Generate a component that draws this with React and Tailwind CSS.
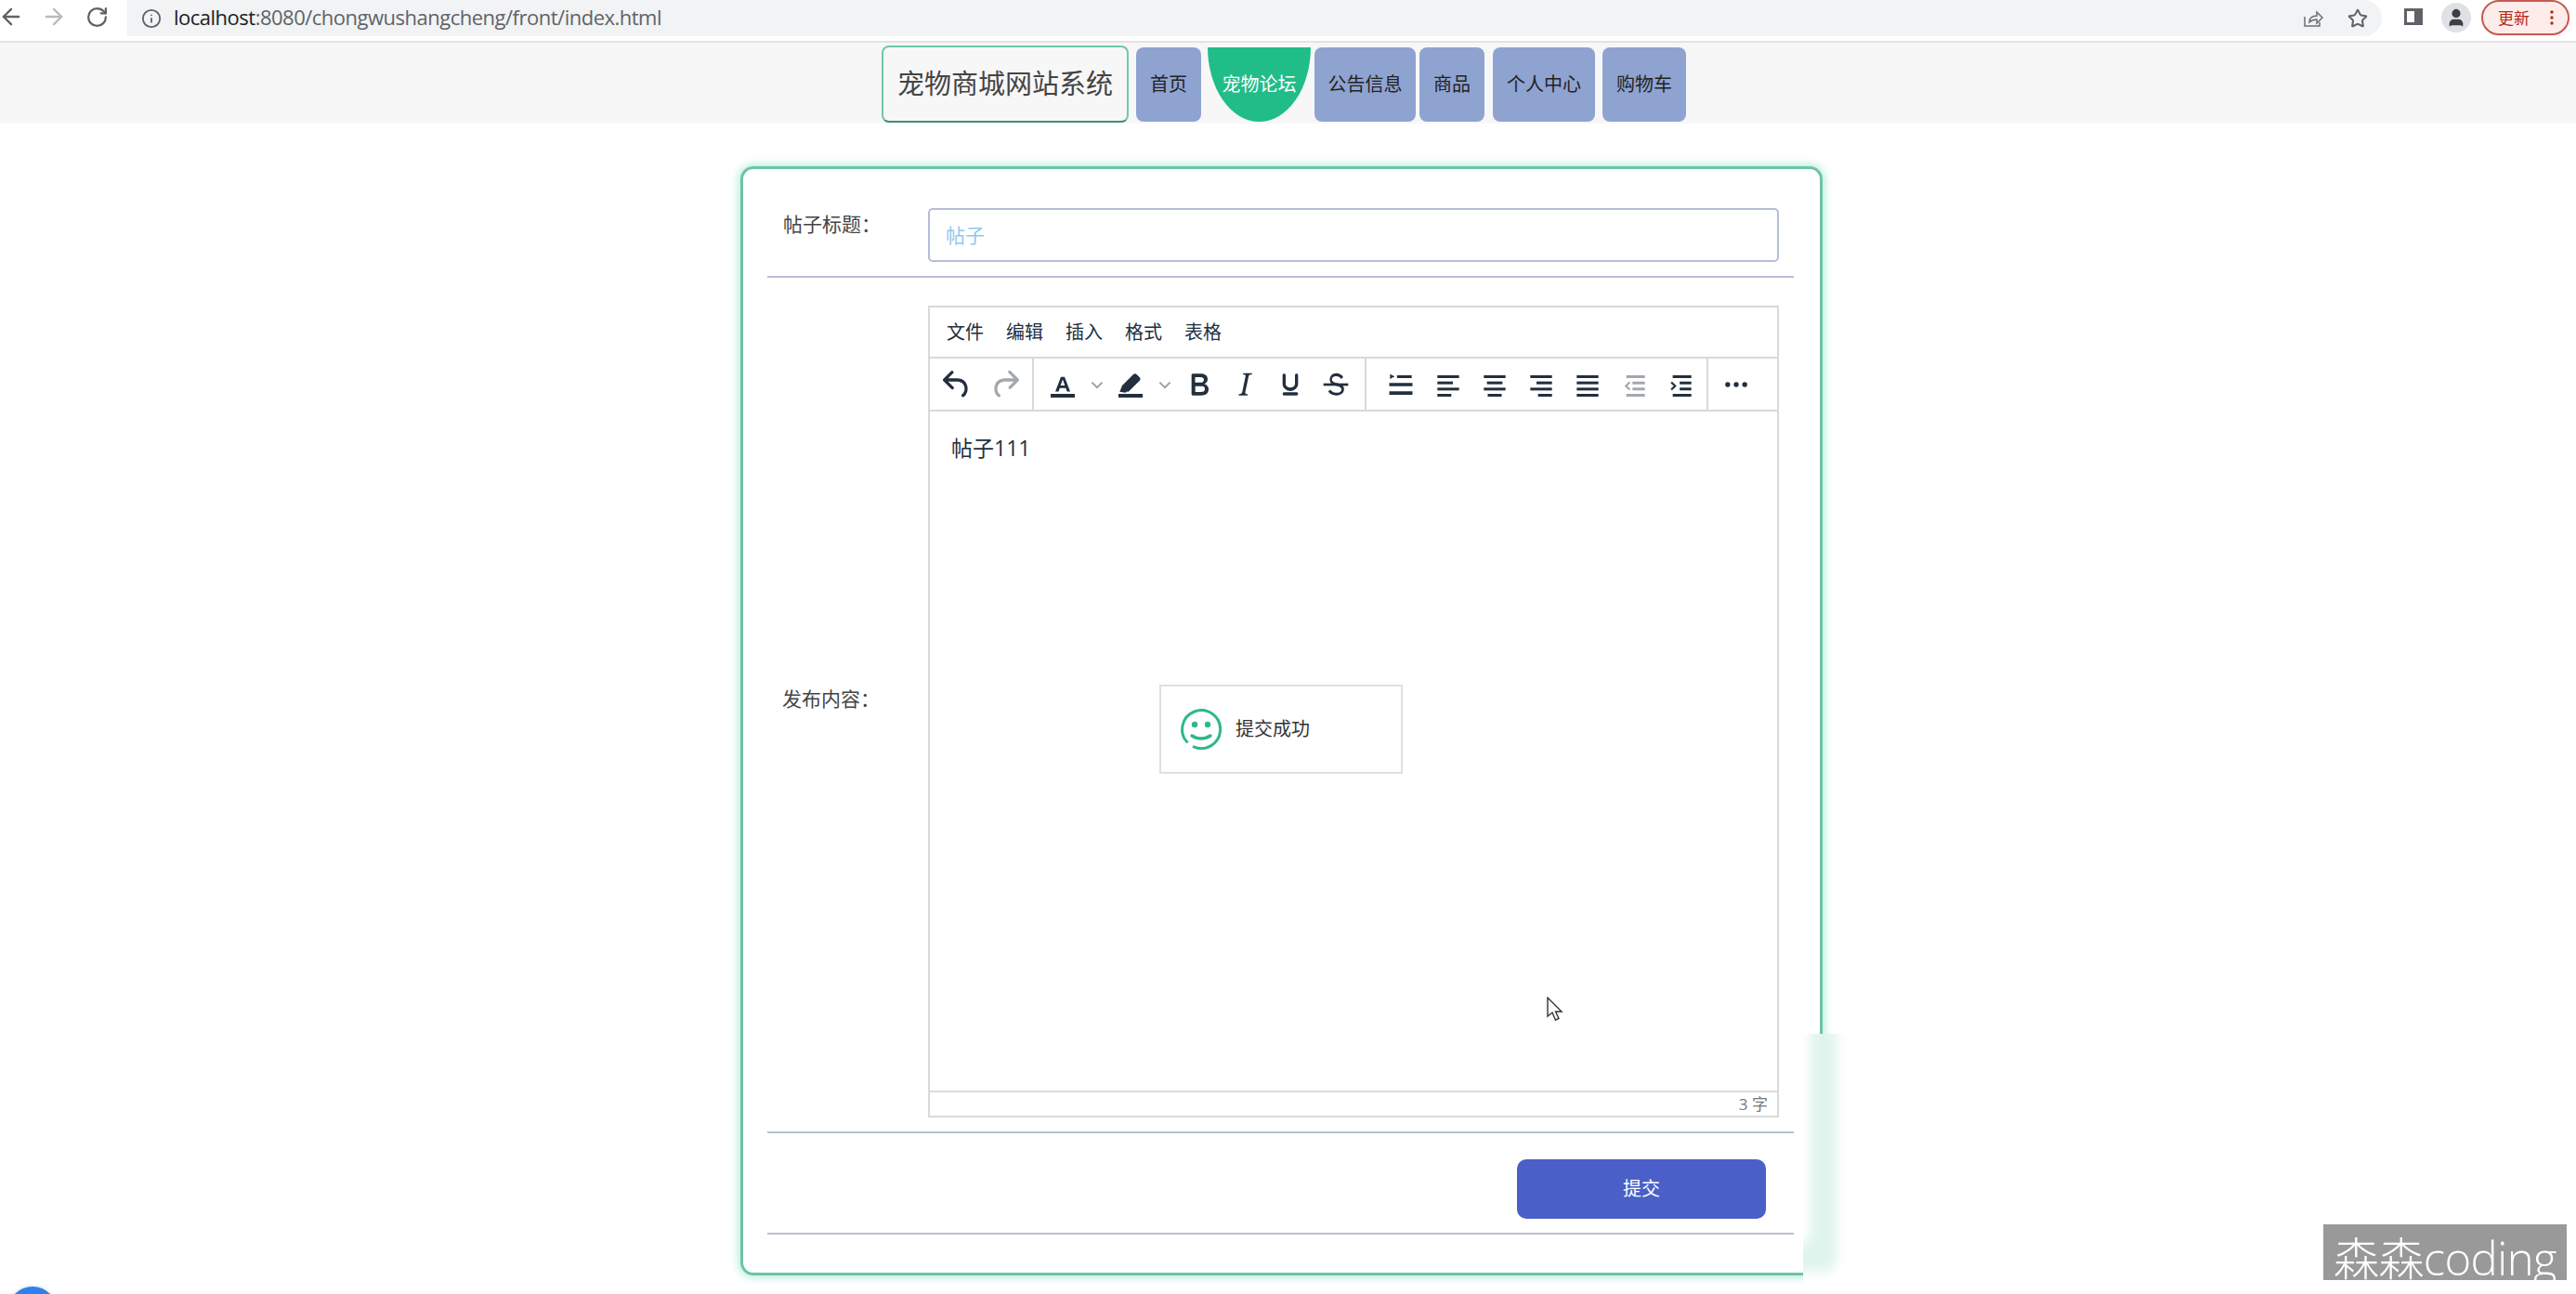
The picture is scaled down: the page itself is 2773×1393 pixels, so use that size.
import { ArrowLeft, ArrowRight, RotateCw, Info, Star, User } from "lucide-react";

const navItems = [
  { label: "首页", width: "w-[70px]", gap: "ml-[8px]" },
  { label: "宠物论坛", width: "w-[111px]", gap: "ml-[7px]", active: true },
  { label: "公告信息", width: "w-[109px]", gap: "ml-[4px]" },
  { label: "商品", width: "w-[70px]", gap: "ml-[4px]" },
  { label: "个人中心", width: "w-[110px]", gap: "ml-[9px]" },
  { label: "购物车", width: "w-[90px]", gap: "ml-[8px]" },
];

// editor icons, 24 unit box like the editor's own set
const Ico = ({ children, className = "text-[#222f3e]" }) => (
  <svg viewBox="0 0 24 24" fill="currentColor" className={`w-10 h-10 ${className}`}>
    {children}
  </svg>
);

const Btn = ({ children, className = "w-[50px]" }) => (
  <div className={`h-full flex items-center justify-center ${className}`}>{children}</div>
);

const Chevron = () => (
  <svg viewBox="0 0 10 10" fill="none" stroke="#9aa0a8" strokeWidth="1.2" className="w-4 h-4">
    <path d="M1.5 3.5 5 7l3.5-3.5" />
  </svg>
);

const Lines = ({ rows }) => (
  <Ico>
    {rows.map(([x, w], i) => (
      <rect key={i} x={x} y={6 + i * 4} width={w} height="1.8" />
    ))}
  </Ico>
);

function Toolbar() {
  return (
    <div className="flex h-[57px] border-b-2 border-[#d9d9d9]">
      <div className="flex items-center pl-[4px] w-[112px] border-r-2 border-[#d9d9d9]">
        <Btn>
          <Ico>
            <path d="M6.4 8H12c3.7 0 6.2 2 6.8 5.1.6 2.7-.4 5.6-2.3 6.8a1 1 0 0 1-1-1.8c1.1-.6 1.8-2.7 1.4-4.6-.5-2.1-2.1-3.5-4.9-3.5H6.4l3.3 3.3a1 1 0 1 1-1.4 1.4l-5-5a1 1 0 0 1 0-1.4l5-5a1 1 0 0 1 1.4 1.4L6.4 8Z" />
          </Ico>
        </Btn>
        <Btn className="w-[50px] ml-[2px]">
          <Ico className="text-[#a3a8ae]">
            <path d="M17.6 10H12c-2.8 0-4.4 1.4-4.9 3.5-.4 2 .3 4 1.4 4.6a1 1 0 1 1-1 1.8c-2-1.2-2.9-4.1-2.3-6.8.6-3 3-5.1 6.8-5.1h5.6l-3.3-3.3a1 1 0 1 1 1.4-1.4l5 5a1 1 0 0 1 0 1.4l-5 5a1 1 0 0 1-1.4-1.4l3.3-3.3Z" />
          </Ico>
        </Btn>
      </div>
      <div className="flex items-center pl-[6px] w-[358px] border-r-2 border-[#d9d9d9]">
        <Btn>
          <Ico>
            <path d="M4.200 18h15.600v2.400H4.200z" />
            <path d="M10.800 7h2.400l3.600 9.500h-2l-.8-2.300h-3.900l-.8 2.300H7.200L10.800 7Zm-.2 5.600h2.800L12 8.700l-1.400 3.900Z" />
          </Ico>
        </Btn>
        <Btn className="w-[23px]"><Chevron /></Btn>
        <Btn>
          <Ico>
            <path d="M4.200 18h15.600v2.400H4.200z" />
            <path d="M5 16.600 6.600 12.600l7.200-7.200a1.500 1.500 0 0 1 2.100 0l2 2a1.500 1.500 0 0 1 0 2.100l-7.300 7.100-1-.1-.8.800L5 16.600Z" />
          </Ico>
        </Btn>
        <Btn className="w-[24px]"><Chevron /></Btn>
        <Btn className="w-[49px]">
          <Ico>
            <path d="M7.800 19c-.3 0-.5 0-.6-.2l-.2-.5V5.700c0-.2 0-.4.200-.5l.6-.2h5c1.500 0 2.700.3 3.500 1 .7.600 1.100 1.400 1.100 2.500a3 3 0 0 1-.6 1.900c-.4.600-1 1-1.600 1.200.4.100.9.300 1.300.6s.8.700 1 1.200c.4.400.5 1 .5 1.600 0 1.300-.4 2.300-1.300 3-.8.700-2.100 1-3.800 1H7.800Zm5-8.300c.6 0 1.200-.1 1.600-.5.4-.3.6-.7.6-1.300 0-1.100-.8-1.700-2.300-1.700H9.300v3.500h3.400Zm.5 6c.7 0 1.300-.1 1.700-.4.4-.4.6-.9.6-1.500s-.2-1-.7-1.400c-.4-.3-1-.4-2-.4H9.400v3.800h4Z" />
          </Ico>
        </Btn>
        <Btn className="w-[49px]">
          <Ico>
            <path d="M16.700 4.700l-.1.900h-.3c-.6 0-1 0-1.400.3-.3.3-.4.6-.5 1.100l-2.100 9.800v.6c0 .5.4.8 1.400.8h.2l-.2.8H8l.2-.8h.2c1.100 0 1.800-.5 2-1.500l2-9.800.1-.5c0-.6-.4-.8-1.400-.8h-.3l.2-.9h5.800Z" />
          </Ico>
        </Btn>
        <Btn className="w-[49px]">
          <Ico>
            <path d="M16 5c.6 0 1 .4 1 1v5.500a4 4 0 0 1-.4 1.800l-1 1.400a5.300 5.300 0 0 1-5.500 1 5 5 0 0 1-1.600-1c-.5-.4-.8-.9-1.100-1.400a4 4 0 0 1-.4-1.800V6c0-.6.4-1 1-1s1 .4 1 1v5.500c0 .3 0 .6.200 1l.6.7a3.300 3.300 0 0 0 2.200.8 3.400 3.400 0 0 0 2.200-.8c.3-.2.4-.5.600-.8l.2-.9V6c0-.6.4-1 1-1ZM8 17h8c.6 0 1 .4 1 1s-.4 1-1 1H8a1 1 0 0 1 0-2Z" />
          </Ico>
        </Btn>
        <Btn className="w-[49px]">
          <Ico>
            <path d="M15.600 8.500c-.5-.7-1-1.100-1.300-1.300-.6-.4-1.300-.6-2-.6-2.700 0-2.800 1.700-2.800 2.100 0 1.600 1.800 2 3.200 2.300 4.400.9 4.600 2.800 4.600 3.900 0 1.400-.7 4.100-5 4.100A6.200 6.200 0 0 1 7 16.400l1.500-1.100c.4.6 1.600 2 3.700 2 1.600 0 2.500-.4 3-1 .3-.4.4-.8.4-1.200 0-1.600-2.200-2.100-3.600-2.400-1-.2-3-.8-3.600-2.400a4.100 4.100 0 0 1 .5-4c.6-.9 1.800-1.600 3.500-1.600 1.800 0 3 .9 3.700 1.600l.7.9-1.600 1.300Z" />
            <path d="M4 11.200h16v1.600H4z" />
          </Ico>
        </Btn>
      </div>
      <div className="flex items-center pl-[11px] w-[368px] border-r-2 border-[#d9d9d9]">
        <Btn className="w-[52px]">
          <Ico>
            <path d="M5 5.200 8 6.800 5 8.400zM9.500 6h9.500v1.800H9.500z" />
            <path d="M4.500 11h15v2h-15zM4.500 16.400h15v2.200h-15z" />
          </Ico>
        </Btn>
        <Btn><Lines rows={[[5, 14], [5, 10], [5, 14], [5, 9]]} /></Btn>
        <Btn><Lines rows={[[5, 14], [7, 10], [5, 14], [7.5, 9]]} /></Btn>
        <Btn><Lines rows={[[5, 14], [9, 10], [5, 14], [10, 9]]} /></Btn>
        <Btn><Lines rows={[[5, 14], [5, 14], [5, 14], [5, 14]]} /></Btn>
        <Btn>
          <Ico className="text-[#a3a8ae]">
            <path d="M7 6h12v1.800H7zM11 10h8v1.800h-8zM11 14h8v1.800h-8zM7 18h12v1.800H7zM8.800 10l-3 2.900 3 2.900.9-.9-2-2 2-2z" />
          </Ico>
        </Btn>
        <Btn>
          <Ico>
            <path d="M7 6h12v1.800H7zM11.500 10H19v1.800h-7.500zM11.500 14H19v1.800h-7.500zM7 18h12v1.800H7zM6.500 10l3 2.900-3 2.900-.9-.9 2-2-2-2z" />
          </Ico>
        </Btn>
      </div>
      <div className="flex items-center pl-[5px]">
        <Btn>
          <Ico>
            <circle cx="6.500" cy="12" r="1.600" />
            <circle cx="12" cy="12" r="1.600" />
            <circle cx="17.500" cy="12" r="1.600" />
          </Ico>
        </Btn>
      </div>
    </div>
  );
}

export default function App() {
  return (
    <div className="relative h-[1393px] overflow-hidden bg-white font-['Open_Sans','Noto_Sans_CJK_SC',sans-serif]">
      {/* browser bar */}
      <div className="flex items-start h-[46px] bg-white border-b-2 border-[#e3e3e4]">
        <ArrowLeft className="w-7 h-7 mt-[4px] text-[#5f6368] -ml-[2px]" strokeWidth={2} />
        <ArrowRight className="w-7 h-7 mt-[4px] ml-[18px] text-[#b8babd]" strokeWidth={2} />
        <RotateCw className="w-[25px] h-[25px] mt-[6px] ml-[20px] text-[#5f6368]" strokeWidth={2.2} />
        <div className="flex items-center ml-[20px] w-[2427px] h-[39px] pb-[3px] bg-[#f1f3f4] rounded-r-full rounded-bl-[20px]">
          <Info className="w-[22px] h-[22px] ml-[15px] mt-[3px] text-[#5f6368]" strokeWidth={2} />
          <span className="ml-[13px] text-[22px] leading-none tracking-[-0.5px] text-[#5f6368]">
            <span className="text-[#202124]">localhost</span>:8080/chongwushangcheng/front/index.html
          </span>
          <svg viewBox="0 0 24 24" fill="none" stroke="#6b6f73" strokeWidth="1.5" className="ml-auto mt-[3px] w-6 h-6">
            <path d="M3 10v10h16v-4" />
            <path d="M8 16c0-5 3-7 8-7V5l6 6-6 6v-4c-4 0-6 1-8 3Z" />
          </svg>
          <Star className="w-[22px] h-[22px] ml-[25px] mr-[15px] mt-[3px] text-[#5f6368]" strokeWidth={2.2} />
        </div>
        <div className="w-[20px] h-[18px] mt-[9px] ml-[24px] border-[3px] border-r-[9px] border-[#5f6368]" />
        <div className="flex items-center justify-center w-8 h-8 mt-[3px] ml-[20px] rounded-full bg-[#dee1e6]">
          <User className="w-[22px] h-[22px] text-[#3c4043]" fill="#3c4043" />
        </div>
        <div className="flex items-center w-[95px] h-[38px] ml-[11px] rounded-full border-2 border-[#c9584f] bg-[#fdecea]">
          <span className="ml-[16px] text-[17px] leading-none text-[#b3261e]">更新</span>
          <svg viewBox="0 0 4 16" fill="#b3261e" className="w-1 h-4 ml-[22px]">
            <circle cx="2" cy="2" r="1.700" />
            <circle cx="2" cy="8" r="1.700" />
            <circle cx="2" cy="14" r="1.700" />
          </svg>
        </div>
      </div>

      {/* site nav */}
      <div className="flex items-start h-[87px] pt-[3px] pl-[949px] bg-[#f7f7f8]">
        <div className="flex items-center justify-center w-[266px] h-[83px] rounded-[8px] border-2 border-[#6fc9a8] border-b-[#3f8f76] pb-[2px] text-[29px] leading-none text-[#444]">
          宠物商城网站系统
        </div>
        {navItems.map((item) => (
          <div
            key={item.label}
            className={`flex items-center justify-center h-[80px] mt-[2px] text-[20px] leading-none ${item.width} ${item.gap} ${
              item.active
                ? "bg-[#20bd88] text-white [border-radius:0_0_50%_50%/0_0_100%_100%]"
                : "bg-[#8fa3d1] text-[#222] rounded-[8px]"
            }`}
          >
            {item.label}
          </div>
        ))}
      </div>

      {/* form card */}
      <div className="ml-[797px] mt-[46px] w-[1165px] h-[1194px] px-[26px] pr-[28px] rounded-[14px] border-[3px] border-[#6cc4a6] shadow-[0_0_10px_2px_#b4ecd8] bg-white">
        <div className="flex items-start pt-[42px] pb-[15px] border-b-2 border-[#b9c0d6]">
          <div className="w-[173px] pl-[17px] pt-[1px] text-[21px] leading-[32px] text-[#444]">帖子标题：</div>
          <div className="flex items-center w-[916px] h-[58px] pl-[17px] rounded-[5px] border-2 border-[#b5bdd8] text-[21px] leading-none text-[#8fc8ee]">
            帖子
          </div>
        </div>

        <div className="flex items-center pt-[30px] pb-[15px] border-b-2 border-[#b9c0d6]">
          <div className="w-[173px] pl-[16px] pb-[28px] text-[21px] leading-[32px] text-[#444]">发布内容：</div>
          <div className="flex flex-col w-[916px] h-[874px] border-2 border-[#d9d9d9] text-[#222f3e]">
            <div className="flex items-center gap-6 h-[55px] pl-[18px] border-b-2 border-[#d9d9d9] text-[20px] leading-none">
              <span>文件</span>
              <span>编辑</span>
              <span>插入</span>
              <span>格式</span>
              <span>表格</span>
            </div>
            <Toolbar />
            <div className="flex-1 pt-[23px] pl-[23px] text-[23px] leading-[32px]">帖子111</div>
            <div className="flex items-center justify-end h-[27px] pr-[10px] border-t-2 border-[#d9d9d9] text-[17px] leading-none text-[#777]">
              3 字
            </div>
          </div>
        </div>

        <div className="flex justify-end pt-[28px] pb-[15px] pr-[30px] border-b-2 border-[#bcc0d0]">
          <button className="w-[268px] h-[64px] rounded-[10px] bg-[#4a5fc7] text-[20px] leading-none text-white">提交</button>
        </div>
      </div>

      {/* toast */}
      <div className="absolute left-[1248px] top-[737px] flex items-center w-[262px] h-[96px] pl-[21px] bg-white border-2 border-[#e0e0e0]">
        <svg viewBox="0 0 44 44" fill="none" className="w-[44px] h-[44px]">
          <path d="M7.500 36.500A20.500 20.500 0 1 1 13 40.500" stroke="#2fb88a" strokeWidth="3" />
          <circle cx="15" cy="17" r="3.200" fill="#2fb88a" />
          <circle cx="29" cy="17" r="3.200" fill="#2fb88a" />
          <path d="M12 29c6 4 14 4 20 0" stroke="#2fb88a" strokeWidth="3.400" strokeLinecap="round" />
        </svg>
        <span className="ml-[15px] text-[20px] leading-none text-[#333]">提交成功</span>
      </div>

      {/* mouse cursor */}
      <svg viewBox="0 0 18 28" fill="white" stroke="#333" strokeWidth="1.400" className="absolute left-[1665px] top-[1073px] w-[18px] h-[28px]">
        <path d="M1 1v20l5-4 3.500 8 3.500-1.500L9.500 16H16L1 1Z" />
      </svg>

      {/* smear left over from the capture */}
      <div className="absolute left-[1941px] top-[1113px] w-[50px] h-[280px] overflow-hidden bg-white">
        <div className="absolute -left-[60px] -top-[40px] w-[96px] h-[296px] rounded-[14px] blur-[6px] bg-[#dff4ec]" />
        <div className="absolute -left-[60px] -top-[40px] w-[68px] h-[268px] rounded-[14px] blur-[7px] bg-white" />
      </div>

      {/* watermark */}
      <div className="absolute left-[2501px] top-[1318px] w-[262px] h-[60px] bg-[#999]">
        <div className="pl-[11px] pt-[4px] text-[49px] leading-[64px] tracking-[-0.6px] font-light text-white whitespace-nowrap">森森coding</div>
      </div>

      {/* round button cut by the bottom edge */}
      <div className="absolute left-[8px] top-[1385px] w-[54px] h-[54px] rounded-full bg-[#2f80ed] shadow-[0_0_4px_#cfd8e8]" />
    </div>
  );
}
